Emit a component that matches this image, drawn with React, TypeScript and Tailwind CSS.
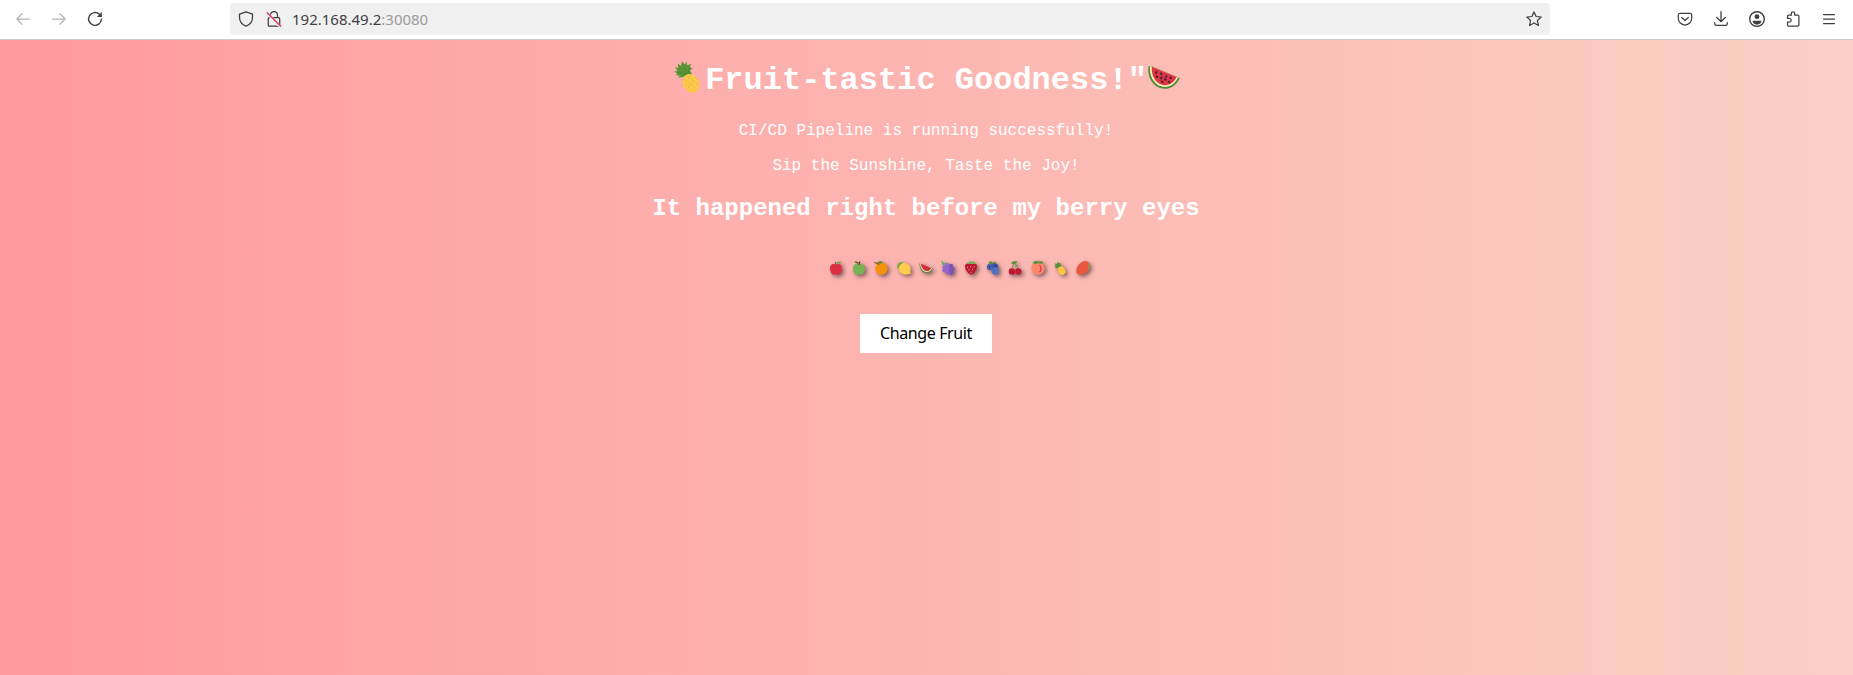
import React from "react";

type IconProps = { children: React.ReactNode; className?: string };

function Icon({ children, className = "" }: IconProps) {
  return (
    <svg
      viewBox="0 0 16 16"
      fill="none"
      stroke="currentColor"
      strokeWidth="1.25"
      strokeLinecap="round"
      strokeLinejoin="round"
      className={"h-4 w-4 shrink-0 " + className}
    >
      {children}
    </svg>
  );
}

function Toolbar() {
  return (
    <header className="flex h-10 items-center border-b border-[#cccccc] bg-white pb-px pl-[15px] pr-4 text-[#3f3f42]">
      <nav className="flex gap-5">
        <Icon className="text-[#b5b5b6]">
          <path d="M14.5 8H1.8M7 2.8 1.8 8 7 13.2" />
        </Icon>
        <Icon className="text-[#b5b5b6]">
          <path d="M1.5 8h12.7M9 2.8 14.2 8 9 13.2" />
        </Icon>
        <Icon>
          <path d="M12.3 3.2A6.4 6.4 0 1 0 14.4 8.3" strokeWidth="1.4" />
          <path d="M14.9 1v5h-5z" fill="currentColor" stroke="none" />
        </Icon>
      </nav>
      <div className="ml-[127px] flex h-8 w-[1320px] items-center rounded bg-[#f0f0f1] px-2">
        <Icon>
          <path d="M8 .8 14.5 3.2v3C14.5 10.7 11.8 13.8 8 15.2 4.2 13.8 1.5 10.7 1.5 6.2v-3z" />
        </Icon>
        <Icon className="ml-3">
          <path d="M4.5 6.5V4a3.5 3.5 0 0 1 7 0v2.5M3.5 6.7h9a1.2 1.2 0 0 1 1.2 1.2v6a1.2 1.2 0 0 1-1.2 1.2h-9a1.2 1.2 0 0 1-1.2-1.2v-6a1.2 1.2 0 0 1 1.2-1.2z" />
          <path d="M1.5 2.5 13.7 15" stroke="#f0f0f1" strokeWidth="2.6" />
          <path d="M1.2 1.7 14.7 15.2" stroke="#e22850" />
        </Icon>
        <span className="ml-[10px] font-['Noto_Sans',sans-serif] text-[15px] leading-8">
          192.168.49.2<span className="text-[#9b9b9c]">:30080</span>
        </span>
        <Icon className="ml-auto">
          <path d="m8 .9 2.1 4.6 5.1.6-3.8 3.4 1 5L8 12l-4.400 2.500 1-5L.8 6.100l5.100-.6z" />
        </Icon>
      </div>
      <nav className="ml-auto flex gap-5">
        <Icon>
          <path d="M2.8 2.4h10.4A1.5 1.5 0 0 1 14.7 3.9v3.4a6.7 6.7 0 0 1-13.4 0V3.9a1.5 1.5 0 0 1 1.5-1.5zM4.7 6.5 8 9.5l3.3-3" />
        </Icon>
        <Icon>
          <path d="M8 .6v10M3.7 6.5 8 10.700l4.300-4.200M1.700 11.600v1.200c0 1 .6 1.600 1.600 1.600h9.400c1 0 1.600-.6 1.600-1.600v-1.200" />
        </Icon>
        <Icon>
          <circle cx="8" cy="8" r="7.3" strokeWidth="1.4" />
          <circle cx="8" cy="5.7" r="2.4" fill="currentColor" stroke="none" />
          <path d="M3.7 9.7h8.6v1.2c-1.2 1.9-2.6 2.6-4.3 2.6s-3.100-.7-4.300-2.600z" fill="currentColor" stroke="none" />
        </Icon>
        <Icon>
          <path d="M2.500 7.300V5.400c0-.8.400-1.200 1.200-1.200h2.600V2.500a1.700 1.700 0 0 1 3.400 0v1.700h3c.8 0 1.200.4 1.200 1.200v8.500c0 .8-.4 1.200-1.200 1.200h-9c-.8 0-1.200-.4-1.200-1.200V11h1.800a1.700 1.700 0 0 0 0-3.700z" />
        </Icon>
        <Icon>
          <path d="M2.500 3.500h11M2.500 8h11M2.500 12.500h11" />
        </Icon>
      </nav>
    </header>
  );
}

function Pineapple({ className }: { className: string }) {
  return (
    <svg viewBox="0 0 26 32" className={className}>
      <path
        d="M13.500 16.500 9 16l-5 .8 1.700-2L1.500 14l2-1.300L.2 10.500l3.300-.3L1 6l3.200 1L4 2.600 7 5l1-5 2.300 3.500L13 .8l-.2 3.400L17.500 3l-2 3 3.300 1.500-2.900 1.700L18 13z"
        fill="#5c9538"
      />
      <path d="M2 10.500 12 14M5 5l7 9M9 2l4 12M16 5l-3 9" stroke="#417c2b" strokeWidth=".5" />
      <ellipse cx="17" cy="22.3" rx="8" ry="9.8" transform="rotate(-30 17 22.3)" fill="#fdc94c" />
      <path
        d="m11 19 12 9m-9-12 10 8M11 24l8 6M22 16 13 28m12-7-7 10M17 14l-6 9"
        stroke="#f0ab35"
        strokeWidth="1"
        strokeDasharray="1 2.6"
      />
    </svg>
  );
}

function Watermelon({ className }: { className: string }) {
  return (
    <svg viewBox="0 0 32 23" className={className}>
      <path d="M.5.2C-1 10 4 20 13 22.300 21 24.300 28 20 31.800 12.200L29.500 11 3 0z" fill="#4f8b3b" />
      <path d="M2 0C1 9 5.500 18.500 13.500 20.500 21 22.200 26.500 18.500 30.200 11.500z" fill="#f7efaf" />
      <path d="M3.800.7C3 8.500 7 17 14 18.800c6.300 1.500 11.500-1.800 14.700-7.800z" fill="#df3347" />
      <path
        d="m8.500 6-.5 1M13 7.500l.6.900M18.500 10l-.4 1M22.500 11.500l.5.900M8.500 10.500l1 .6M13.500 11.500l-.5 1M17 13l.6.800M13.800 15.500l.7.700M21 15.500l.3 1"
        stroke="#27272b"
        strokeWidth="1.7"
        strokeLinecap="round"
      />
    </svg>
  );
}

const fruitShapes: { name: string; art: React.ReactNode }[] = [
  {
    name: "Red apple",
    art: (
      <>
        <path d="M7 3.500C3 1.800.8 4.300 1 7.800c.2 3.400 2 6 3.800 5.900 1-.1 1.200-.4 2.200-.4s1.300.4 2.300.4c1.900 0 3.600-2.600 3.700-5.900C13.100 4.300 11 1.800 7 3.500z" fill="#dd2e44" />
        <path d="M7 4 6.500.8" stroke="#7c4028" />
        <path d="M7.300 2.600C8 .8 10 .3 12.500 1 11.500 2.500 9.500 3.200 7.300 2.600z" fill="#62a744" />
      </>
    ),
  },
  {
    name: "Green apple",
    art: (
      <>
        <path d="M7 3.500C3 1.800.8 4.300 1 7.800c.2 3.400 2 6 3.800 5.900 1-.1 1.200-.4 2.200-.4s1.300.4 2.300.4c1.900 0 3.600-2.600 3.700-5.900C13.100 4.300 11 1.800 7 3.500z" fill="#77b255" />
        <path d="m7 4 .7-3.500" stroke="#662113" />
        <path d="M7.200 2.500C5.500 2.800 3.500 2.200 2.300.8 4.600.1 6.400.8 7.200 2.500z" fill="#3e721d" />
      </>
    ),
  },
  {
    name: "Orange",
    art: (
      <>
        <circle cx="7.5" cy="7.7" r="6.2" fill="#f4900c" />
        <path d="M3.200 1.500C5.200-.2 7.800 0 9.200 1 8 3 5 3.200 3.200 1.500z" fill="#5c913b" />
        <path d="M.3 1.800C2.500 1.500 4 2.300 5 3.500" stroke="#8a4a1c" fill="none" strokeWidth="1.2" />
      </>
    ),
  },
  {
    name: "Lemon",
    art: (
      <>
        <path d="M0 .8 3 1.200M.3 7.300C-.2 3.600 1.300 1 5.500.8 6 4.500 4 7.200.3 7.300z" fill="#77a740" />
        <path d="M2 6.500C3 2.500 7 .8 10.500 3c3 2 3.600 5 2.900 7.400l.5 2-2.200.5C8 14.500 1 12.500 2 6.500z" fill="#ffcc4d" />
      </>
    ),
  },
  {
    name: "Watermelon",
    art: (
      <>
        <path d="M.4 2.200C.6 8 3.200 12 7.500 12c3 0 5.300-1.600 6.300-4.800z" fill="#4f8b3b" />
        <path d="M1 2.300c.5 5 2.800 8.600 6.600 8.700 2.500 0 4.600-1.400 5.500-4z" fill="#f7efaf" />
        <path d="M1.800 2.500c.6 4.400 2.700 7.400 5.900 7.500 2.200 0 3.800-1 4.600-3.100z" fill="#dd2e44" />
        <path d="m4.500 5 .2.600M7.500 6.200l.3.700M6.500 8.300l.4.400M9.800 7.500l.3.500" stroke="#292f33" strokeWidth=".8" />
      </>
    ),
  },
  {
    name: "Grapes",
    art: (
      <>
        <path d="M.4.3 1.600 0 2.600 2 5 1.500 4.500 4.500 1.500 4z" fill="#69ad5a" />
        <g fill="#9266cc">
          <circle cx="3.3" cy="6" r="2" />
          <circle cx="6.300" cy="4.200" r="2.100" />
          <circle cx="3.200" cy="9.300" r="2" />
          <circle cx="6.600" cy="7.800" r="2.300" />
          <circle cx="6.700" cy="11.200" r="2.200" />
        </g>
        <g fill="#7c55b4">
          <circle cx="10" cy="5" r="2.200" />
          <circle cx="11.800" cy="7.900" r="2" />
          <circle cx="9.600" cy="9" r="1.800" />
          <circle cx="10.600" cy="11.800" r="2.100" />
        </g>
      </>
    ),
  },
  {
    name: "Strawberry",
    art: (
      <>
        <path d="M1 4.600C1.600 2.300 4.800 2.300 7 3c2.200-.7 5.400-.7 6 1.600.6 3.500-2.800 8.300-5.500 9.200C4.200 13.500.4 8.200 1 4.600z" fill="#be1931" />
        <path d="M2 2 5 1.300 5.500 0 7.500.7 10 .2l.3 1.300 2 .7L9.500 3 7 2.700 4.500 3z" fill="#77b255" />
        <path d="M3.500 5.700v1M6.500 5.300v1M10 5.500v1M5 8.300v1M8.500 8v1M7 10.800v1" stroke="#f4abba" strokeWidth=".9" />
      </>
    ),
  },
  {
    name: "Blueberries",
    art: (
      <>
        <path d="M2.500 1 5 .3 7 1.500 9.500.3 9 3.500 4 4z" fill="#5c913b" />
        <circle cx="4" cy="6" r="3.200" fill="#4a62b4" />
        <circle cx="9" cy="5.5" r="3.200" fill="#3f54a4" />
        <circle cx="9.3" cy="10" r="3.7" fill="#5270bd" />
        <path d="m3 5.600 1.500.3M8.700 4.800l1.400.4" stroke="#202c66" strokeWidth="1.3" />
      </>
    ),
  },
  {
    name: "Cherries",
    art: (
      <>
        <path d="M3.800 9C4 5.500 5.500 3 6.500 1.500 8 4 9.800 6 10 9" fill="none" stroke="#6f8e3c" strokeWidth=".9" />
        <path d="M3 2.200C4.500-.3 7 0 9.500.6 8.500 3.200 5.500 4 3 2.200z" fill="#5c913b" />
        <circle cx="3.9" cy="10.5" r="3.2" fill="#be1931" />
        <circle cx="10.3" cy="10.5" r="3.2" fill="#be1931" />
      </>
    ),
  },
  {
    name: "Peach",
    art: (
      <>
        <path d="M7 2.800C3 .7.500 3.700.5 7.300.5 11 4 13.800 7.300 13.800S13.800 11 13.700 7.300C13.600 3.700 11 .7 7 2.800z" fill="#ff886c" />
        <path d="M8.500 4c1.800 2 1.700 5 .2 7.300" fill="none" stroke="#dd2e44" strokeWidth="1.1" />
        <path d="M1.500 2C3-.4 5.500-.3 7.500.6 9.500-.2 12 0 12.700 2 10.700 3.100 9 2.900 7.500 2.100 5.500 3.300 3.400 3.100 1.500 2z" fill="#5c913b" />
      </>
    ),
  },
  {
    name: "Pineapple",
    art: (
      <>
        <path d="m2 6.800.7-1L1.200 4.600l1.200-.3-.5-2 1.800.6L4.800.8l1 1.400 2-.5-.3 1.800L9 5 7 7.800z" fill="#5c913b" />
        <ellipse cx="8.7" cy="9.6" rx="3.6" ry="4.3" transform="rotate(-28 8.7 9.6)" fill="#fdc740" />
      </>
    ),
  },
  {
    name: "Mango",
    art: (
      <>
        <path d="M11.300.5c3 1.500 3.300 6 1 9C9.800 13 4.500 15 1.500 13-.7 11 .2 6 3.300 3 6 .3 9-.6 11.300.5z" fill="#e9573f" />
        <path d="M12.200 2.200c1.700 1.600 2 4.200.2 6.400-1.100-1.700.5-3.800-.2-6.400z" fill="#77a744" />
      </>
    ),
  },
];

export default function App() {
  return (
    <div className="flex h-[675px] w-full flex-col overflow-hidden">
      <Toolbar />
      <main className="flex flex-1 flex-col items-center bg-[linear-gradient(to_right,#ff9a9e_0%,#fad0c4_99%,#fad0c4_100%)] pr-px pt-[21px] font-['Liberation_Mono',monospace] text-white">
        <h1 className="ml-[2px] flex h-[38px] items-start text-[32px] font-bold leading-10">
          <Pineapple className="mr-[5px] h-8 w-[26px]" />
          <span>Fruit-tastic Goodness!"</span>
          <Watermelon className="ml-px mt-[5px] h-[23px] w-8" />
        </h1>
        <p className="mt-[23px] text-base leading-[18px]">CI/CD Pipeline is running successfully!</p>
        <p className="mt-[17px] text-base leading-[18px]">Sip the Sunshine, Taste the Joy!</p>
        <h2 className="mt-5 text-2xl font-bold leading-7">It happened right before my berry eyes</h2>
        <div className="ml-[67px] mt-[38px] flex gap-[8.4px]">
          {fruitShapes.map((fruit) => (
            <svg
              key={fruit.name}
              viewBox="0 0 14 14"
              className="h-[14px] w-[14px] overflow-visible drop-shadow-[2px_2px_2px_rgba(0,0,0,0.5)]"
            >
              {fruit.art}
            </svg>
          ))}
        </div>
        <button className="mt-[39px] h-[39px] w-[132px] bg-white pb-[2px] font-['Noto_Sans',sans-serif] text-base tracking-[-0.4px] text-black">
          Change Fruit
        </button>
      </main>
    </div>
  );
}
